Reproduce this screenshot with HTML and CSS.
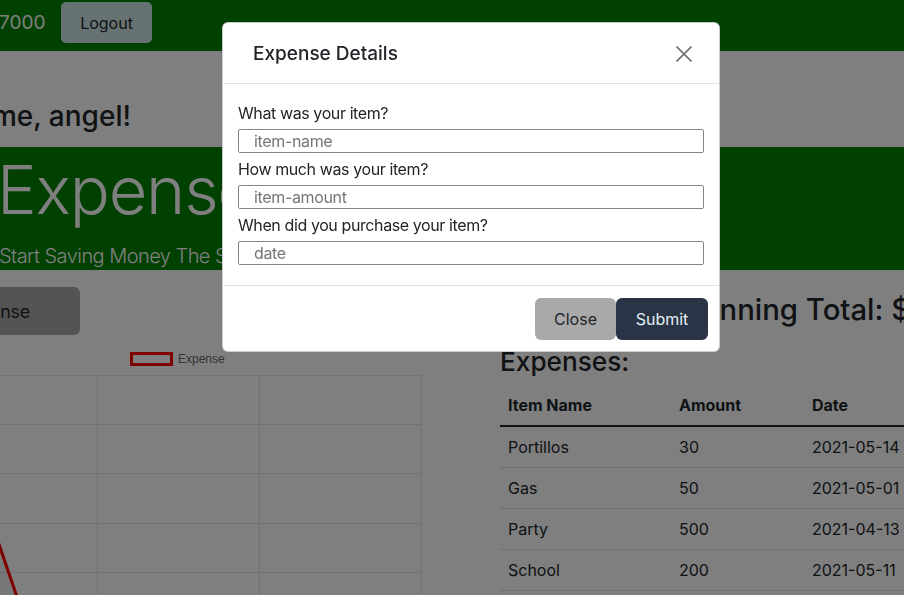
FILE: index.html
```html
<!DOCTYPE html>
<html lang="en">
<head>
<meta charset="utf-8">
<title>Expense Tracker</title>
<link rel="stylesheet" href="styles.css">
</head>
<body>
<div class="page">
  <nav class="topbar">
    <span class="budget">7000</span>
    <button class="btn-logout">Logout</button>
  </nav>

  <section class="welcome">
    <div class="welcome-clip"><h3 class="welcome-title">Welcome, angel!</h3></div>
  </section>

  <section class="jumbo">
    <h1 class="jumbo-title">Expense Tracker</h1>
    <p class="jumbo-lead">Start Saving Money The Smart Way</p>
  </section>

  <div class="main">
    <div class="left-col">
      <div class="add-row"><button class="btn-add">Add Expense</button></div>
      <svg class="chart" width="430" height="260" viewBox="0 0 430 260">
        <rect x="131.5" y="13.5" width="40" height="11" fill="rgba(255,255,255,0.08)" stroke="#ff0000" stroke-width="3"/>
        <text x="178" y="23" class="legend-text">Expense</text>
        <g stroke="#e4e4e4" stroke-width="1">
          <line x1="0" y1="35.5" x2="421" y2="35.5"/>
          <line x1="0" y1="84.5" x2="421" y2="84.5"/>
          <line x1="0" y1="133.5" x2="421" y2="133.5"/>
          <line x1="0" y1="183.5" x2="421" y2="183.5"/>
          <line x1="0" y1="232.5" x2="421" y2="232.5"/>
          <line x1="97.5" y1="35" x2="97.5" y2="260"/>
          <line x1="259.5" y1="35" x2="259.5" y2="260"/>
          <line x1="421.5" y1="35" x2="421.5" y2="260"/>
        </g>
        <polygon points="-10,180 17,260 -10,260" fill="rgba(0,0,0,0.06)"/>
        <line x1="-10" y1="178" x2="17" y2="257" stroke="#ff0000" stroke-width="3"/>
      </svg>
    </div>

    <div class="right-col">
      <h2 class="total">Running Total: $780</h2>
      <h3 class="expenses-title">Expenses:</h3>
      <table class="expenses">
        <thead>
          <tr><th class="c1">Item Name</th><th class="c2">Amount</th><th class="c3">Date</th></tr>
        </thead>
        <tbody>
          <tr><td>Portillos</td><td>30</td><td>2021-05-14</td></tr>
          <tr><td>Gas</td><td>50</td><td>2021-05-01</td></tr>
          <tr><td>Party</td><td>500</td><td>2021-04-13</td></tr>
          <tr><td>School</td><td>200</td><td>2021-05-11</td></tr>
        </tbody>
      </table>
    </div>
  </div>
</div>

<div class="backdrop"></div>

<div class="modal">
  <div class="modal-header">
    <h5 class="modal-title">Expense Details</h5>
    <button class="btn-close" aria-label="Close">
      <svg width="16" height="16" viewBox="0 0 16 16"><path d="M0.5 0.5 L15.5 15.5 M15.5 0.5 L0.5 15.5" stroke="#6f6f6f" stroke-width="1.6" fill="none"/></svg>
    </button>
  </div>
  <div class="modal-body">
    <label class="field-label">What was your item?</label>
    <input class="field" type="text" placeholder="item-name">
    <label class="field-label">How much was your item?</label>
    <input class="field" type="text" placeholder="item-amount">
    <label class="field-label">When did you purchase your item?</label>
    <input class="field" type="text" placeholder="date">
  </div>
  <div class="modal-footer">
    <button class="btn-close-text">Close</button>
    <button class="btn-submit">Submit</button>
  </div>
</div>
</body>
</html>
```

FILE: styles.css
```css
html, body {
  margin: 0;
  padding: 0;
  width: 904px;
  height: 595px;
  overflow: hidden;
}
body {
  font-family: Inter, "Liberation Sans", sans-serif;
  color: #212529;
  background: #ffffff;
  font-size: 16px;
  line-height: 1.5;
}
.page {
  width: 904px;
}

/* top bar */
.topbar {
  height: 51px;
  box-sizing: border-box;
  background: #008000;
  display: flex;
  align-items: flex-start;
  padding-top: 2px;
}
.budget {
  color: #ffffff;
  font-size: 19px;
  line-height: 41px;
  width: 61px;
  margin-left: -1px;
  margin-right: 1px;
}
.btn-logout {
  width: 91px;
  height: 41px;
  border: none;
  border-radius: 5px;
  background: #cfe6e6;
  color: #212529;
  font-family: inherit;
  font-size: 16px;
  padding: 0;
}

/* welcome */
.welcome {
  height: 96px;
  box-sizing: border-box;
  padding-top: 48px;
}
.welcome-clip {
  width: 131px;
  display: flex;
  justify-content: flex-end;
}
.welcome-title {
  margin: 0;
  white-space: nowrap;
  font-size: 28px;
  font-weight: 500;
  line-height: 34px;
  flex-shrink: 0;
}

/* jumbotron */
.jumbo {
  height: 123px;
  box-sizing: border-box;
  background: #008000;
  padding-top: 9px;
  color: #ffffff;
}
.jumbo-title {
  margin: 0 0 0 -3px;
  font-size: 66.7px;
  font-weight: 300;
  line-height: 67px;
  letter-spacing: -1.2px;
  white-space: nowrap;
}
.jumbo-lead {
  margin: 18px 0 0 -1px;
  font-size: 20px;
  font-weight: 300;
  line-height: 30px;
  letter-spacing: -0.55px;
  white-space: nowrap;
}

/* main */
.main {
  display: flex;
  align-items: flex-start;
}
.left-col {
  width: 430px;
  flex-shrink: 0;
  padding-top: 17px;
}
.add-row {
  width: 80px;
  display: flex;
  justify-content: flex-end;
}
.btn-add {
  flex-shrink: 0;
  height: 48px;
  border: none;
  border-radius: 6px;
  background: #a9a9a9;
  color: #212529;
  font-family: inherit;
  font-size: 18px;
  letter-spacing: -0.3px;
  padding: 0 50px 0 52px;
  white-space: nowrap;
}
.chart {
  display: block;
  margin-top: 5px;
  overflow: hidden;
}
.legend-text {
  font-family: "Liberation Sans", Arial, sans-serif;
  font-size: 12px;
  fill: #666666;
}

.right-col {
  margin-left: 70px;
  flex-shrink: 0;
  width: 600px;
}
.total {
  margin: 21px 0 0;
  padding-left: 183px;
  font-size: 29.3px;
  font-weight: 500;
  line-height: 38px;
  white-space: nowrap;
}
.expenses-title {
  margin: 16px 0 6px;
  font-size: 26.2px;
  font-weight: 500;
  line-height: 34px;
}
.expenses {
  border-collapse: collapse;
  width: 600px;
}
.expenses th, .expenses td {
  text-align: left;
  padding: 8px;
  line-height: 24px;
  font-size: 16px;
}
.expenses th {
  font-weight: 700;
  border-bottom: 2px solid #212529;
}
.expenses td {
  border-bottom: 1px solid #dee2e6;
}
.c1 { width: 155px; }
.c2 { width: 117px; }

/* backdrop + modal */
.backdrop {
  position: fixed;
  inset: 0;
  background: rgba(0, 0, 0, 0.5);
}
.modal {
  position: absolute;
  left: 222px;
  top: 22px;
  width: 498px;
  box-sizing: border-box;
  background: #ffffff;
  border: 1px solid rgba(0, 0, 0, 0.2);
  border-radius: 6px;
}
.modal-header {
  display: flex;
  align-items: center;
  padding: 16px 27px 14px 30px;
  border-bottom: 1px solid #dee2e6;
}
.modal-title {
  margin: 0;
  font-size: 19px;
  font-weight: 500;
  line-height: 30px;
}
.btn-close {
  margin-left: auto;
  width: 16px;
  height: 16px;
  padding: 0;
  border: none;
  background: transparent;
  display: flex;
}
.modal-body {
  padding: 17px 15px 16px;
}
.field-label {
  display: block;
  font-size: 16px;
  line-height: 24px;
  letter-spacing: -0.4px;
  margin-bottom: 4px;
}
.field {
  display: block;
  box-sizing: border-box;
  width: 100%;
  height: 24px;
  margin: 0 0 4px;
  padding: 0 15px;
  border: 1px solid #858585;
  border-radius: 2px;
  font-family: inherit;
  font-size: 16px;
  letter-spacing: -0.35px;
  color: #212529;
}
.field::placeholder {
  color: #757575;
}
.modal-footer {
  display: flex;
  justify-content: flex-end;
  padding: 12px 11px 11px;
  border-top: 1px solid #dee2e6;
}
.btn-close-text, .btn-submit {
  height: 42px;
  border: none;
  border-radius: 6px;
  font-family: inherit;
  font-size: 16px;
  padding: 0;
}
.btn-close-text {
  width: 81px;
  background: #a9a9a9;
  color: #212529;
}
.btn-submit {
  width: 92px;
  background: #293546;
  color: #e3f0f3;
}
```
